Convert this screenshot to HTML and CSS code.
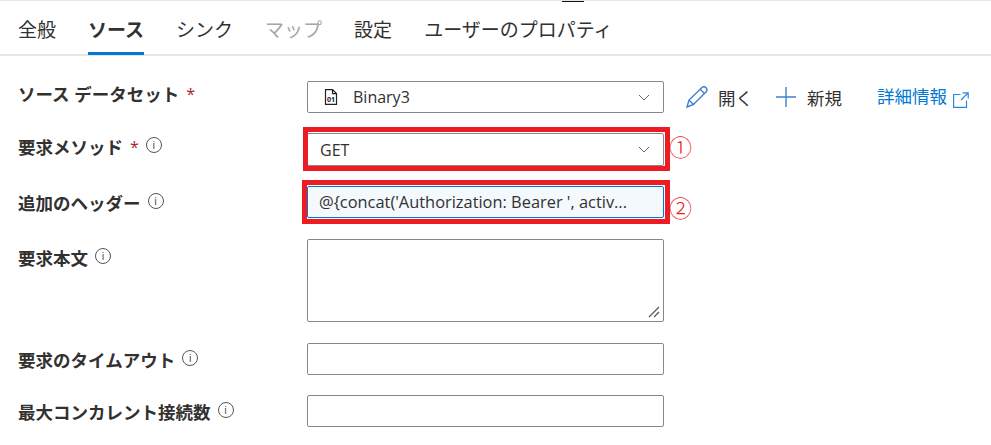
FILE: index.html
```html
<!DOCTYPE html>
<html lang="ja">
<head>
  <meta charset="UTF-8" />
  <title>ソース</title>
  <link rel="stylesheet" href="styles.css">
</head>
<body>

  <div class="top-mark"></div>

  <ul class="tabs">
    <li>全般</li>
    <li class="active">ソース</li>
    <li>シンク</li>
    <li class="disabled">マップ</li>
    <li>設定</li>
    <li>ユーザーのプロパティ</li>
  </ul>

  <form class="source-form">
    <div class="row row-dataset">
      <label>ソース データセット<span class="req">*</span></label>
      <div class="control select">
        <svg class="file-icon" viewBox="0 0 14 16" width="14" height="16">
          <path d="M1.500 .6h7L12.500 4.600V15.400H1.500z M8.500 .6v4h4" fill="none" stroke="#222" stroke-width="1.200"/>
          <text x="7" y="13" text-anchor="middle" class="file-bits">01</text>
        </svg>
        <span>Binary3</span>
        <svg class="chevron" viewBox="0 0 12 7" width="12" height="7"><path d="M1 1l5 5 5-5" fill="none" stroke="#666" stroke-width="1"/></svg>
      </div>
      <div class="actions">
        <span class="action">
          <svg viewBox="0 0 24 24" width="24" height="24"><path d="M2 22l2-7L17 2.500c1-1 3-1 4 .2s1.200 3 .2 4L8.500 19.500z M4 15l5 5 M15.500 4.500l4.500 4.500" fill="none" stroke="#3f7fd0" stroke-width="1.400"/></svg>
          開く
        </span>
        <span class="action action-new">
          <svg viewBox="0 0 22 22" width="22" height="22"><path d="M11 1v20M1 11h20" fill="none" stroke="#3f7fd0" stroke-width="1.400"/></svg>
          新規
        </span>
        <a class="more">詳細情報
          <svg viewBox="0 0 16 16" width="16" height="16"><path d="M7.500 2.500H.6V15.400h12.900V8.500M9.500 .8h5.700v5.700M15 1L8 8" fill="none" stroke="#2b88d8" stroke-width="1.200"/></svg>
        </a>
      </div>
    </div>

    <div class="row row-method">
      <label>要求メソッド<span class="req">*</span><i class="info">i</i></label>
      <div class="control select marked">
        <span>GET</span>
        <svg class="chevron" viewBox="0 0 12 7" width="12" height="7"><path d="M1 1l5 5 5-5" fill="none" stroke="#666" stroke-width="1"/></svg>
      </div>
      <span class="callout">①</span>
    </div>

    <div class="row row-header">
      <label>追加のヘッダー<i class="info">i</i></label>
      <div class="control marked focused">@{concat('Authorization: Bearer ', activ...</div>
      <span class="callout">②</span>
    </div>

    <div class="row row-body">
      <label>要求本文<i class="info">i</i></label>
      <div class="control textarea">
        <svg class="grip" viewBox="0 0 12 12" width="12" height="12"><path d="M1 11L11 1M6 11l5-5" fill="none" stroke="#555" stroke-width="1.200"/></svg>
      </div>
    </div>

    <div class="row row-timeout">
      <label>要求のタイムアウト<i class="info">i</i></label>
      <div class="control"></div>
    </div>

    <div class="row">
      <label>最大コンカレント接続数<i class="info">i</i></label>
      <div class="control"></div>
    </div>
  </form>

</body>
</html>
```

FILE: styles.css
```css
html, body {
  height: 100%;
}
body {
  margin: 0;
  background: white;
  color: #323130;
  font-family: "Open Sans", "Noto Sans CJK JP", sans-serif;
  overflow: hidden;
  position: relative;
  border-top: 1px solid #e6e6e6;
  box-sizing: border-box;
}
.top-mark {
  position: absolute;
  top: -1px;
  left: 562px;
  width: 22px;
  height: 2px;
  background: #111;
}
.tabs {
  list-style: none;
  margin: 0;
  padding: 0 0 0 18px;
  height: 53px;
  display: flex;
  gap: 32px;
  border-bottom: 2px solid #e6e6e6;
  font-size: 19px;
  line-height: 59px;
}
.tabs li {
  height: 53px;
}
.tabs .active {
  font-weight: bold;
  height: 51px;
  border-bottom: 3px solid #0078d4;
}
.tabs .disabled {
  color: #a6a6a6;
}
.source-form {
  padding: 25px 0 0 18px;
}
.row {
  display: grid;
  grid-template-columns: 289px 357px auto;
  align-items: start;
  margin-bottom: 20px;
}
.row-header,
.row-body {
  margin-bottom: 21px;
}
label {
  font-size: 17.500px;
  font-weight: bold;
  line-height: 24px;
  display: flex;
  align-items: center;
  gap: 7px;
  white-space: pre;
  margin-top: 5px;
}
.row-dataset label {
  margin-top: 1px;
}
.row-method label {
  margin-top: 2px;
}
.row-body label {
  margin-top: 7px;
}
.req {
  color: #a4262c;
  font-size: 16px;
  font-weight: normal;
}
.info {
  display: inline-block;
  width: 14px;
  height: 14px;
  border: 1px solid #555;
  border-radius: 50%;
  font-size: 10px;
  font-style: normal;
  font-weight: normal;
  line-height: 14px;
  text-align: center;
  margin-top: -4px;
}
.control {
  height: 32px;
  box-sizing: border-box;
  border: 1px solid #8a8886;
  border-radius: 2px;
  padding: 0 12px;
  font-size: 16px;
  line-height: 30px;
  display: flex;
  align-items: center;
  position: relative;
}
.select .chevron {
  margin-left: auto;
  margin-right: 1px;
}
.file-icon {
  margin: 0 15px 0 4px;
}
.file-bits {
  font-size: 7px;
  font-weight: bold;
  fill: #222;
}
.row-method .control {
  height: 33px;
}
/* red annotation frames drawn over the screenshot */
.marked::after {
  content: "";
  position: absolute;
  top: -7px;
  left: -5px;
  right: -7px;
  bottom: -6px;
  border: 5px solid #ed1c24;
  pointer-events: none;
}
.focused::after {
  top: -7px;
  left: -6px;
  right: -7px;
  bottom: -7px;
}
.focused {
  background: #f3f9fd;
  border-color: #0078d4;
  padding-left: 11px;
  font-size: 16.400px;
  white-space: nowrap;
}
.textarea {
  height: 83px;
}
.grip {
  position: absolute;
  right: 3px;
  bottom: 3px;
}
.actions {
  display: flex;
  align-items: center;
  height: 32px;
  padding-left: 21px;
  font-size: 17.500px;
  white-space: nowrap;
}
.action {
  display: flex;
  align-items: center;
  gap: 9px;
  margin-right: 22px;
}
.action-new {
  gap: 10px;
}
.more {
  color: #0078d4;
  display: flex;
  align-items: center;
  gap: 6px;
  margin-left: 13px;
  line-height: 28px;
  margin-top: -3px;
}
.more svg {
  margin-top: 9px;
}
.callout {
  color: #ed1c24;
  font-size: 23px;
  font-weight: 300;
  line-height: 28px;
  padding-left: 5px;
}
.row-header .callout {
  padding-top: 8px;
  margin-bottom: -8px;
}
```
